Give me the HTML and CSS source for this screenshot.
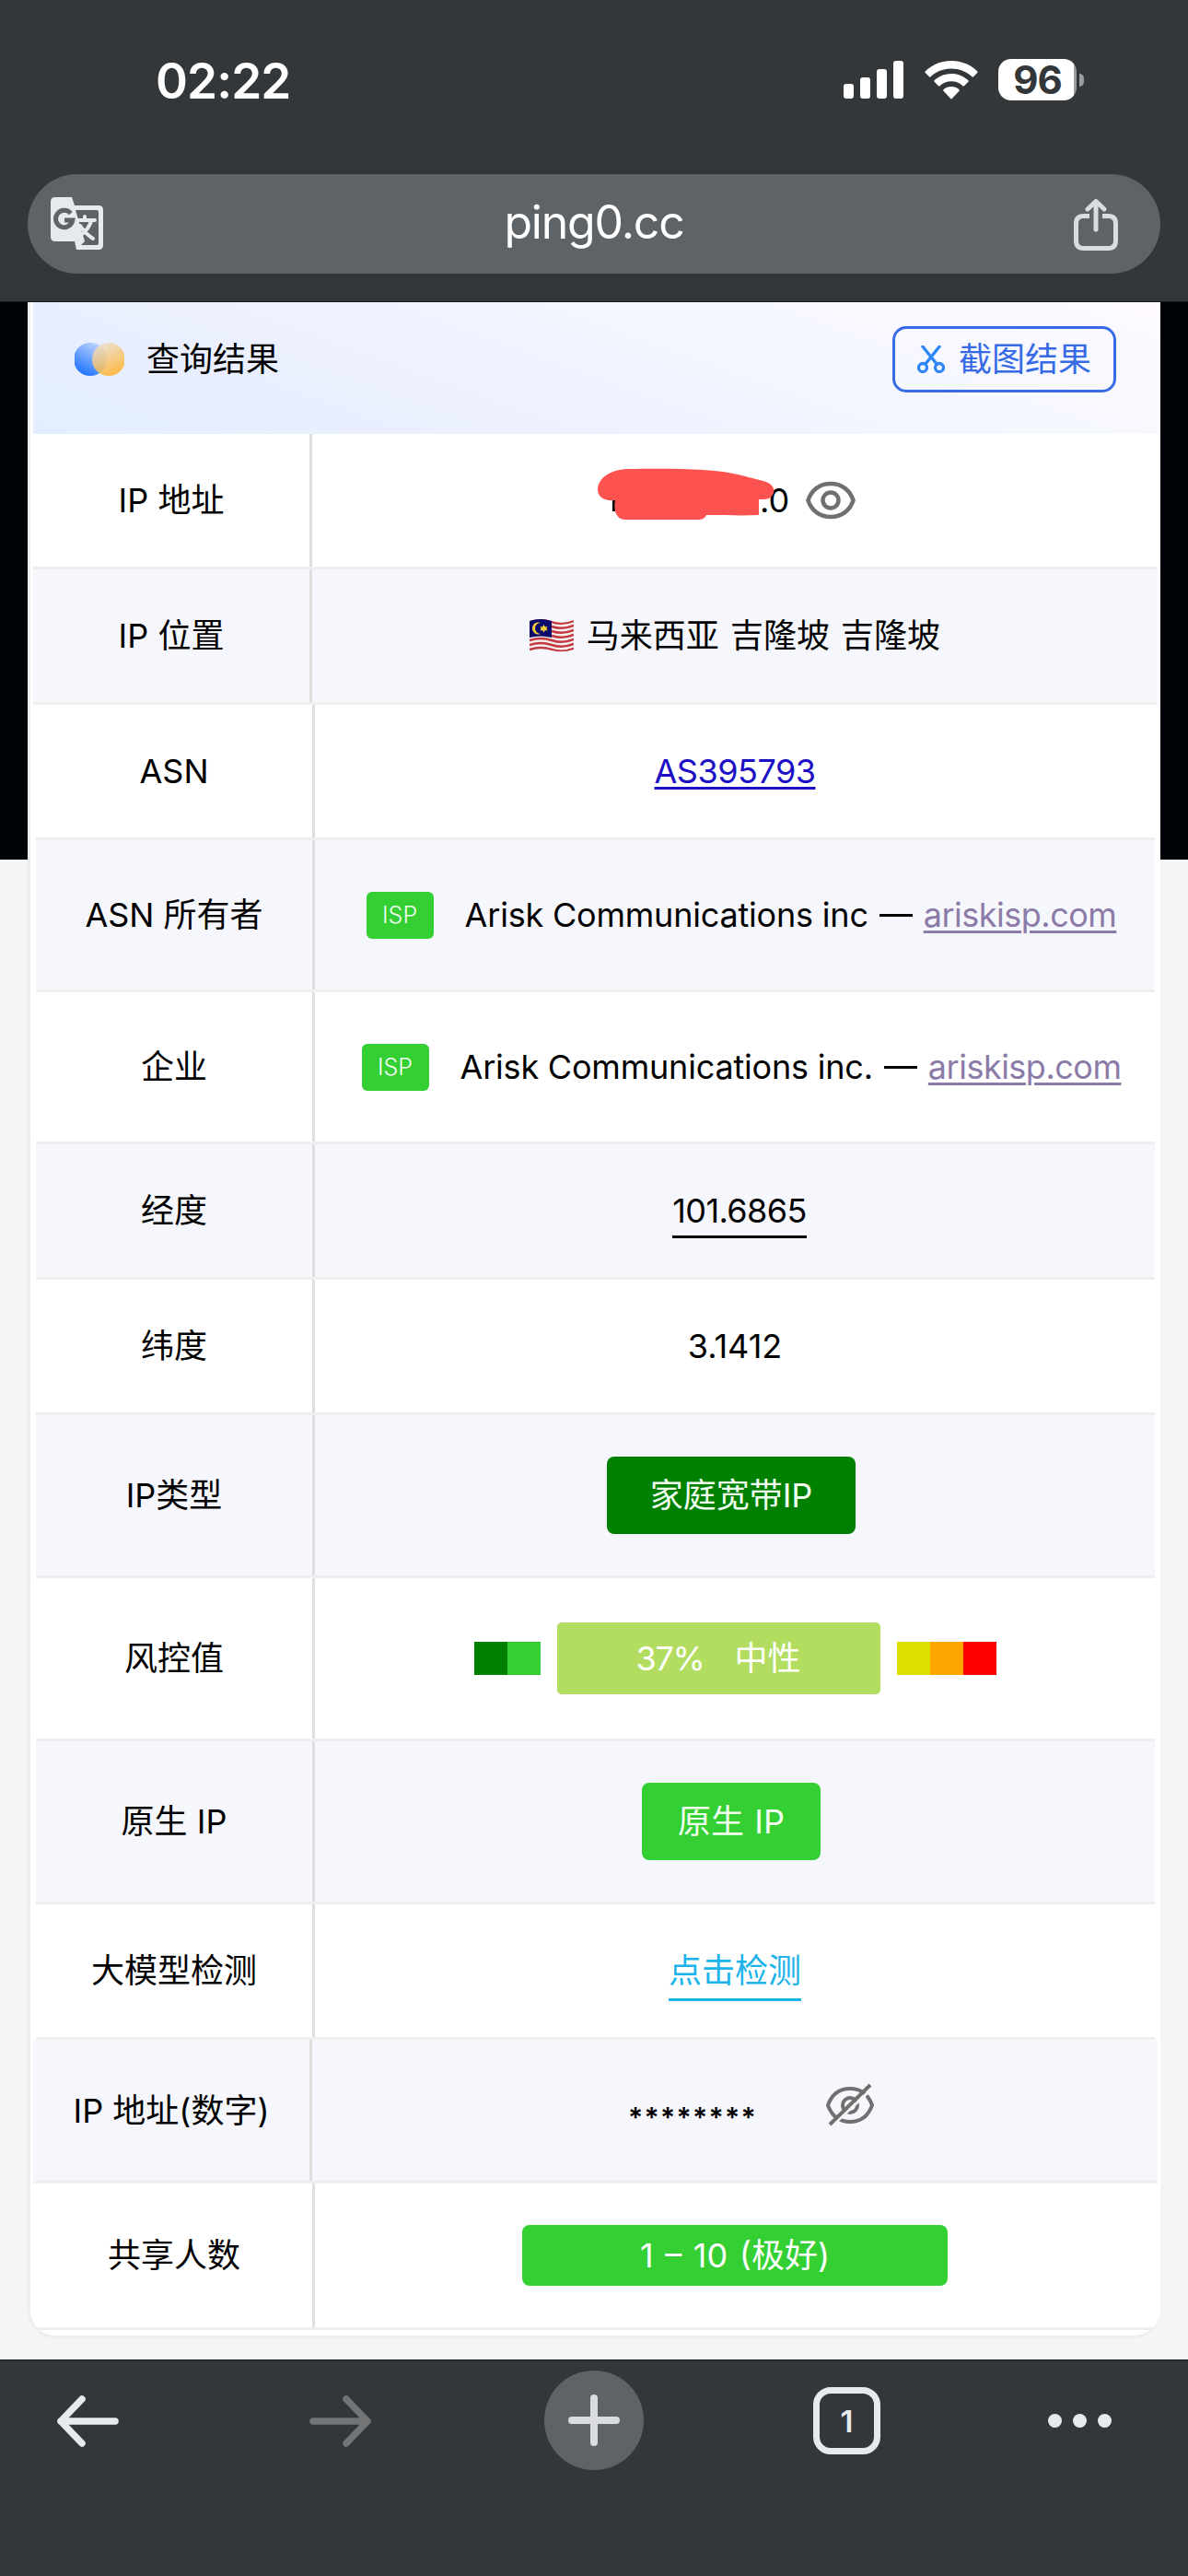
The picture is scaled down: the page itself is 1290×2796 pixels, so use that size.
FILE: index.html
```html
<!DOCTYPE html>
<html lang="zh-CN">
<head>
  <meta charset="UTF-8" />
  <meta name="viewport" content="width=device-width, initial-scale=1.0"/>
  <title>ping0.cc</title>
  <link rel="stylesheet" href="styles.css">
</head>
<body>
  <header class="top">
    <div class="status">
      <span class="time">02:22</span>
      <div class="status-icons">
        <svg class="signal" width="65" height="41" viewBox="0 0 65 41" fill="#fff">
          <rect x="0" y="25" width="11" height="16" rx="3"/>
          <rect x="18" y="18" width="11" height="23" rx="3"/>
          <rect x="36" y="9" width="11" height="32" rx="3"/>
          <rect x="54" y="0" width="11" height="41" rx="3"/>
        </svg>
        <svg class="wifi" width="58" height="42" viewBox="0 0 58 42" fill="#fff">
          <path d="M29 0C40 0 50 4 57.300 11.500Q58 12.300 57.300 13L53 17.300Q52.300 18 51.500 17.300C45.500 11.500 37.500 8.500 29 8.500S12.500 11.500 6.500 17.300Q5.700 18 5 17.300L.7 13Q0 12.300 .7 11.500C8 4 18 0 29 0Z"/>
          <path d="M29 14C36 14 42.500 16.600 47.400 21.300Q48.100 22 47.400 22.800L43 27.200Q42.300 27.900 41.500 27.200C38 24 33.800 22.300 29 22.300S20 24 16.500 27.200Q15.700 27.900 15 27.200L10.600 22.800Q9.900 22 10.600 21.300C15.500 16.600 22 14 29 14Z"/>
          <path d="M29 28C32.300 28 35.200 29.200 37.500 31.200Q38.300 32 37.500 32.800L29.800 41Q29 41.800 28.200 41L20.500 32.800Q19.700 32 20.500 31.200C22.800 29.200 25.700 28 29 28Z"/>
        </svg>
        <div class="battery"><span>96</span></div>
        <i class="battery-cap"></i>
      </div>
    </div>
    <div class="address">
      <svg class="translate" width="57" height="57" viewBox="0 0 57 57">
        <path fill="#e6eaed" d="M5 0H23L26 9H52Q57 9 57 14V52Q57 57 52 57H28L26 48H5Q0 48 0 43V5Q0 0 5 0Z"/>
        <path fill="#5e6367" d="M27 14H50Q52 14 52 16V50Q52 52 50 52H33L37 48L27 14Z"/>
        <path fill="none" stroke="#5e6367" stroke-width="5" d="M21.800 17.600A9.200 9.200 0 1 0 23.800 25H15"/>
        <path fill="none" stroke="#e6eaed" stroke-width="4" stroke-linecap="round" stroke-linejoin="round" d="M29 25H48M37 21V25M44 26Q41 35 34 40M32 31Q37 39 46 45"/>
      </svg>
      <span class="url">ping0.cc</span>
      <svg class="share" width="48" height="56" viewBox="0 0 48 56" fill="none" stroke="#dadce0" stroke-width="5" stroke-linecap="round" stroke-linejoin="round">
        <path stroke-linecap="butt" d="M17 18.500H10.500Q2.500 18.500 2.500 26.500V45Q2.500 53.500 10.500 53.500H37.500Q45.500 53.500 45.500 45V26.500Q45.500 18.500 37.500 18.500H31"/>
        <path d="M24 33V3M15 11L24 2.500L33 11"/>
      </svg>
    </div>
  </header>

  <main class="page">
    <section class="card">
      <div class="card-head">
        <svg class="logo" width="54" height="36" viewBox="0 0 54 36">
          <defs>
            <linearGradient id="blue" x1="0.2" y1="0.9" x2="0.7" y2="0"><stop offset="0" stop-color="#2476ff"/><stop offset="1" stop-color="#bdd3ff"/></linearGradient>
            <linearGradient id="gold" x1="0.7" y1="0.9" x2="0.3" y2="0"><stop offset="0" stop-color="#ffb42e"/><stop offset="1" stop-color="#ecdfcb"/></linearGradient>
          </defs>
          <circle cx="17" cy="18" r="18" fill="url(#blue)"/>
          <circle cx="37" cy="18" r="18" fill="url(#gold)" opacity=".85"/>
        </svg>
        <h1>查询结果</h1>
        <button class="shot">
          <svg width="30" height="30" viewBox="0 0 30 30" fill="none" stroke="#2f87f7" stroke-width="3.300">
            <circle cx="6" cy="24" r="4.500"/>
            <circle cx="24" cy="24" r="4.500"/>
            <path d="M5 0L21 20M25 0L9 20"/>
          </svg>
          截图结果
        </button>
      </div>

      <div class="row wide">
        <div class="name">IP 地址</div>
        <div class="value ip">
          <span class="masked">.0
            <svg class="scribble" width="194" height="58" viewBox="0 0 194 58">
              <path fill="#000" d="M17 35H20V47H17Z"/>
              <path fill="#fc5350" d="M33 1C80 0 120 1 143 5C160 8 176 13 184 15C192 18 194 25 191 29C188 34 184 34 176 34V51C157 52 140 51 119 51C117 55 115 56 108 56H30C20 55 18 44 20 35C7 36 1 31 1 23C2 10 15 2 33 1Z"/>
            </svg>
          </span>
          <svg class="eye" width="54" height="42" viewBox="0 0 54 42" fill="none" stroke="#707070" stroke-width="4.500">
            <path d="M2.500 21C6 10 15 3 27 3S48 10 51.500 21C48 32 39 39 27 39S6 32 2.500 21Z"/>
            <circle cx="27" cy="21" r="8.500"/>
          </svg>
        </div>
      </div>
      <div class="row wide">
        <div class="name">IP 位置</div>
        <div class="value place">
          <svg class="flag" width="48" height="36" viewBox="0 0 48 36">
            <clipPath id="wave"><path d="M0 2Q12 -2 24 2T48 1V33Q36 37 24 34T0 35Z"/></clipPath>
            <g clip-path="url(#wave)">
              <path fill="#f5eeee" d="M0 0H48V36H0Z"/>
              <path fill="none" stroke="#c23a40" stroke-width="2.500" d="M0 3Q12 -1 24 3T48 2M0 8Q12 4 24 8T48 7M0 13Q12 9 24 13T48 12M0 18Q12 14 24 18T48 17M0 23Q12 19 24 23T48 22M0 28Q12 24 24 28T48 27M0 33Q12 29 24 33T48 32"/>
              <path fill="#0a0a6b" d="M0 0H24V20Q12 17 0 20Z"/>
              <path fill="#f2cf3b" d="M12 4A6.500 6.500 0 1 0 12 16A5.500 5.500 0 1 1 12 4Z"/>
              <path fill="#f2cf3b" d="M15.500 6L17 8.500L19.500 8L18.500 10L19.500 12.500L17 12L15.500 14.500L14 12L11.500 12.500L12.500 10L11.500 8L14 8.500Z"/>
            </g>
          </svg>
          马来西亚 吉隆坡 吉隆坡
        </div>
      </div>
      <div class="row">
        <div class="name">ASN</div>
        <div class="value"><a class="asn" href="#">AS395793</a></div>
      </div>
      <div class="row mid">
        <div class="name">ASN 所有者</div>
        <div class="value org"><span class="isp">ISP</span><span class="company">Arisk Communications inc</span><i class="dash"></i><a class="site" href="#">ariskisp.com</a></div>
      </div>
      <div class="row mid">
        <div class="name">企业</div>
        <div class="value org"><span class="isp">ISP</span><span class="company">Arisk Communications inc.</span><i class="dash"></i><a class="site" href="#">ariskisp.com</a></div>
      </div>
      <div class="row">
        <div class="name">经度</div>
        <div class="value"><span class="lined lng">101.6865</span></div>
      </div>
      <div class="row">
        <div class="name">纬度</div>
        <div class="value">3.1412</div>
      </div>
      <div class="row tall">
        <div class="name">IP类型</div>
        <div class="value"><span class="badge type">家庭宽带IP</span></div>
      </div>
      <div class="row tall">
        <div class="name">风控值</div>
        <div class="value risk">
          <div class="steps"><i class="c1"></i><i class="c2"></i></div>
          <span class="score"><span class="percent">37%</span><span>中性</span></span>
          <div class="steps"><i class="c4"></i><i class="c5"></i><i class="c6"></i></div>
        </div>
      </div>
      <div class="row tall">
        <div class="name">原生 IP</div>
        <div class="value"><span class="badge native">原生 IP</span></div>
      </div>
      <div class="row">
        <div class="name">大模型检测</div>
        <div class="value"><a class="lined check" href="#">点击检测</a></div>
      </div>
      <div class="row wide digits">
        <div class="name">IP 地址(数字)</div>
        <div class="value">
          <span class="stars">********</span>
          <svg class="eye-off" width="54" height="48" viewBox="0 0 54 48" fill="none" stroke="#707070" stroke-width="4">
            <path d="M3 24C7 13 15 6 27 6S47 13 51 24C47 35 39 42 27 42S7 35 3 24Z"/>
            <circle cx="27" cy="24" r="8"/>
            <path stroke="#f6f7fc" stroke-width="3" d="M9 45L52 5"/>
            <path d="M5 45L49 2"/>
          </svg>
        </div>
      </div>
      <div class="row shared">
        <div class="name">共享人数</div>
        <div class="value"><span class="people">1 – 10 (极好)</span></div>
      </div>
    </section>
  </main>

  <nav class="toolbar">
    <svg class="back" width="68" height="56" viewBox="0 0 68 56" fill="none" stroke="#e6eaed" stroke-width="7.500" stroke-linecap="round" stroke-linejoin="round"><path d="M64 28H5M28 4L5 28L28 52"/></svg>
    <svg width="68" height="56" viewBox="0 0 68 56" fill="none" stroke="#727476" stroke-width="7.500" stroke-linecap="round" stroke-linejoin="round"><path d="M4 28H63M40 4L63 28L40 52"/></svg>
    <div class="plus">
      <svg width="56" height="56" viewBox="0 0 56 56" stroke="#dadce0" stroke-width="8" stroke-linecap="round"><path d="M28 4V52M4 28H52"/></svg>
    </div>
    <div class="tabs">1</div>
    <div class="dots"><i></i><i></i><i></i></div>
  </nav>
</body>
</html>
```
FILE: styles.css
```css
* {
  box-sizing: border-box;
}

body {
  margin: 0;
  width: 1290px;
  height: 2796px;
  display: flex;
  flex-direction: column;
  overflow: hidden;
  background: #33373a;
  font-family: Inter, "Noto Sans CJK SC", sans-serif;
  font-size: 36px;
  line-height: 44px;
  color: #000;
}

svg {
  display: block;
  flex: none;
}

/* browser header */
.top {
  height: 328px;
  flex: none;
  padding: 0 30px;
  border-bottom: 1px solid #17181c;
}

.status {
  height: 189px;
  padding: 64px 83px 0 139px;
  display: flex;
  justify-content: space-between;
  align-items: flex-start;
  color: #fff;
}

.time {
  font-size: 53px;
  font-weight: 600;
  line-height: 48px;
  letter-spacing: -0.9px;
}

.status-icons {
  display: flex;
  align-items: center;
  height: 45px;
}

.wifi {
  margin: 0 22px 0 23px;
}

.battery {
  width: 85px;
  height: 45px;
  border-radius: 14px;
  background: linear-gradient(90deg, #fff 82px, #9a9c9e 82px);
  color: #33373a;
  font-size: 42px;
  font-weight: 700;
  line-height: 45px;
  text-align: center;
  letter-spacing: -1px;
}

.battery-cap {
  width: 5px;
  height: 14px;
  margin-left: 3px;
  border-radius: 0 5px 5px 0;
  background: #9a9c9e;
}

.address {
  height: 108px;
  padding: 0 46px 0 25px;
  border-radius: 54px;
  background: #5e6367;
  display: flex;
  align-items: center;
  justify-content: space-between;
}

.url {
  color: #fff;
  font-size: 50px;
  letter-spacing: -1.2px;
  padding: 0 0 4px 12px;
}

.translate {
  margin-bottom: 1px;
}

.share {
  margin-top: 1px;
}

/* page */
.page {
  height: 2233px;
  flex: none;
  padding: 0 30px;
  background: linear-gradient(#000408 605px, #f4f5f7 605px);
}

.card {
  height: 2210px;
  padding-left: 3px;
  background: #fff;
  border: solid #eee;
  border-width: 0 0 3px 3px;
  border-radius: 0 0 30px 30px;
  overflow: hidden;
}

.card-head {
  height: 143px;
  margin-right: 3px;
  padding: 26px 45px 0 45px;
  display: flex;
  align-items: flex-start;
  background: linear-gradient(20deg, #e2eeff, #eaefff 25%, #f6f8ff 70%, #fdf9ff);
}

.logo {
  margin: 18px 24px 0 0;
}

h1 {
  margin: 0;
  font-size: 36px;
  font-weight: 400;
  line-height: 72px;
}

.shot {
  width: 243px;
  height: 72px;
  margin-left: auto;
  padding: 0 0 0 24px;
  display: flex;
  align-items: center;
  gap: 15px;
  border: 3px solid #376ae5;
  border-radius: 15px;
  background: none;
  color: #376ae5;
  font: inherit;
}

.row {
  height: 147px;
  margin: 0 6px 0 3px;
  display: flex;
  border-bottom: 3px solid #eee;
}

.row:nth-child(odd) {
  background: #f6f7fc;
}

.wide {
  margin: 0 3px 0 0;
}

.mid {
  height: 165px;
}

.tall {
  height: 177px;
}

.digits {
  height: 156px;
}

.shared {
  height: 159px;
}

.name {
  width: 303px;
  flex: none;
  display: flex;
  align-items: center;
  justify-content: center;
  border-right: 3px solid #dfdfdf;
}

.value {
  flex: 1;
  display: flex;
  align-items: center;
  justify-content: center;
  white-space: nowrap;
}

.ip {
  justify-content: flex-start;
  padding-left: 486px;
}

.ip .masked {
  position: relative;
}

.scribble {
  position: absolute;
  left: -177px;
  top: -13px;
}

.eye {
  margin-left: 18px;
}

.place {
  word-spacing: 2px;
}

.flag {
  margin-right: 14px;
}

.asn {
  color: #1c0fc4;
  letter-spacing: -0.5px;
  text-underline-offset: 4px;
  text-decoration-thickness: 3px;
}

.org {
  padding-left: 14px;
}

.isp {
  width: 73px;
  height: 51px;
  margin-right: 34px;
  border-radius: 6px;
  background: #33cf33;
  color: #f1fff1;
  font-size: 25px;
  font-weight: 300;
  line-height: 51px;
  text-align: center;
}

.company {
  letter-spacing: -0.2px;
}

.dash {
  width: 36px;
  height: 3px;
  margin: 0 12px;
  background: #000;
}

.site {
  color: #8b7ba8;
  letter-spacing: -0.5px;
  text-underline-offset: 4px;
  text-decoration-thickness: 3px;
}

.lined {
  height: 60px;
  line-height: 60px;
  border-bottom: 3px solid #000;
}

.lng {
  margin-left: 10px;
  letter-spacing: -0.6px;
}

.check {
  height: 62px;
  margin-top: 4px;
  line-height: 59px;
  color: #1bb3ea;
  border-color: #1bb3ea;
  text-decoration: none;
}

.badge {
  height: 84px;
  line-height: 84px;
  padding: 0 47px;
  border-radius: 8px;
  background: #008000;
  color: #f1fff1;
  margin-right: 8px;
}

.native {
  padding: 0 39px;
  background: #33cf33;
  word-spacing: 1px;
}

.steps {
  display: flex;
}

.steps i {
  width: 36px;
  height: 36px;
}

.c1 { background: #008000; }
.c2 { background: #33cf33; }
.c4 { background: #dddf00; }
.c5 { background: #ffa500; }
.c6 { background: #f00; }

.score {
  width: 351px;
  height: 78px;
  margin: 0 18px;
  display: flex;
  align-items: center;
  justify-content: center;
  gap: 33px;
  border-radius: 5px;
  background: #b2dd60;
  color: #fff;
}

.percent {
  letter-spacing: -1.3px;
}

.stars {
  font-size: 30px;
  font-weight: 600;
  letter-spacing: 1.300px;
  padding-top: 15px;
}

.eye-off {
  margin: -12px 0 0 74px;
}

.digits .value {
  padding-left: 36px;
}

.people {
  width: 462px;
  height: 66px;
  line-height: 66px;
  border-radius: 8px;
  background: #33cf33;
  color: #fff;
  text-align: center;
  word-spacing: 2.500px;
}

/* bottom toolbar */
.toolbar {
  flex: 1;
  display: flex;
  align-items: flex-start;
  gap: 184px;
  padding: 38px 0 0 61px;
  border-top: 1px solid #17181c;
}

.back {
  margin-right: 23px;
}

.plus {
  width: 108px;
  height: 108px;
  flex: none;
  margin: -27px 0 0 3px;
  border-radius: 50%;
  background: #5e6367;
  display: flex;
  align-items: center;
  justify-content: center;
}

.tabs {
  width: 73px;
  height: 73px;
  flex: none;
  margin-top: -9px;
  border: 7px solid #e6eaed;
  border-radius: 19px;
  color: #e6eaed;
  font-size: 33px;
  font-weight: 600;
  line-height: 60px;
  text-align: center;
}

.dots {
  display: flex;
  gap: 12px;
  margin: 20px 0 0 -2px;
}

.dots i {
  width: 15px;
  height: 15px;
  border-radius: 50%;
  background: #e6eaed;
}
```
